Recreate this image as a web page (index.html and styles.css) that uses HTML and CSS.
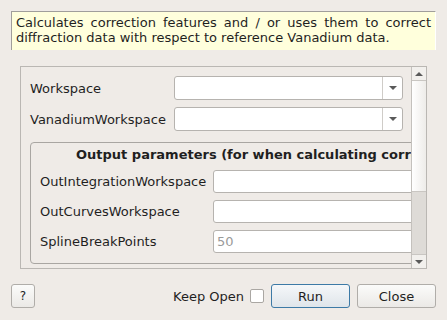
FILE: index.html
```html
<!DOCTYPE html>
<html lang="en">
<head>
    <meta charset="UTF-8">
    <title>Algorithm dialog</title>
    <link rel="stylesheet" href="styles.css">
</head>
<body>
    <div class="dialog">
        <div class="desc">Calculates correction features and / or uses them to correct diffraction data with respect to reference Vanadium data.</div>

        <div class="scroll">
            <div class="viewport">
                <div class="row">
                    <span class="label">Workspace</span>
                    <div class="combo"><span class="combo-btn"><span class="tri-down"></span></span></div>
                </div>
                <div class="row">
                    <span class="label">VanadiumWorkspace</span>
                    <div class="combo"><span class="combo-btn"><span class="tri-down"></span></span></div>
                </div>
                <div class="group">
                    <div class="group-title">Output parameters (for when calculating correction features)</div>
                    <div class="grow">
                        <span class="glabel">OutIntegrationWorkspace</span>
                        <div class="field"></div>
                    </div>
                    <div class="grow">
                        <span class="glabel">OutCurvesWorkspace</span>
                        <div class="field"></div>
                    </div>
                    <div class="grow">
                        <span class="glabel">SplineBreakPoints</span>
                        <div class="field placeholder">50</div>
                    </div>
                </div>
            </div>
            <div class="scrollbar">
                <div class="sb-arrow"><span class="tri-up"></span></div>
                <div class="sb-handle"></div>
                <div class="sb-trough"></div>
                <div class="sb-arrow"><span class="tri-down"></span></div>
            </div>
        </div>

        <div class="buttons">
            <button class="btn help">?</button>
            <span class="spacer"></span>
            <span class="keep">Keep Open</span>
            <span class="check"></span>
            <button class="btn run">Run</button>
            <button class="btn">Close</button>
        </div>
    </div>
</body>
</html>
```

FILE: styles.css
```css
body {
    margin: 0;
    background-color: #efebe7;
    font-family: "DejaVu Sans", sans-serif;
    font-size: 13px;
    color: #1f1f1f;
}

.dialog {
    padding: 11px;
}

/* description banner */
.desc {
    height: 39px;
    box-sizing: border-box;
    padding: 3px 4px 0 4px;
    background-color: #ffffdc;
    border-top: 1px solid #a09e9b;
    border-left: 1px solid #a09e9b;
    border-right: 1px solid #ffffff;
    line-height: 15px;
    text-align: justify;
    text-align-last: left;
}

/* scroll area */
.scroll {
    display: flex;
    height: 203px;
    box-sizing: border-box;
    margin: 16px 9px 0 9px;
    border: 1px solid #bab7b3;
}

.viewport {
    flex: 1;
    overflow: hidden;
    padding: 9px 0 0 9px;
}

.row {
    display: flex;
    align-items: center;
    height: 24px;
    margin-bottom: 7px;
}

.label {
    width: 144px;
    flex-shrink: 0;
}

.combo {
    display: flex;
    justify-content: flex-end;
    width: 229px;
    height: 24px;
    box-sizing: border-box;
    background-color: #ffffff;
    border: 1px solid #b6b3af;
    border-radius: 3px;
}

.combo-btn {
    display: flex;
    align-items: center;
    justify-content: center;
    width: 19px;
    border-left: 1px solid #cfccc8;
}

.tri-down {
    width: 0;
    height: 0;
    border-left: 4px solid transparent;
    border-right: 4px solid transparent;
    border-top: 4px solid #5a5a5a;
}

.tri-up {
    width: 0;
    height: 0;
    border-left: 4px solid transparent;
    border-right: 4px solid transparent;
    border-bottom: 4px solid #5a5a5a;
}

/* group box */
.group {
    width: 430px;
    height: 122px;
    box-sizing: border-box;
    margin-top: 11px;
    padding: 4px 0 0 9px;
    border: 1px solid #a9a6a2;
    border-radius: 4px;
}

.group-title {
    font-weight: bold;
    white-space: nowrap;
    padding-left: 36px;
    line-height: 16px;
    margin-bottom: 7px;
}

.grow {
    display: flex;
    align-items: center;
    height: 23px;
    margin-bottom: 7px;
}

.glabel {
    width: 173px;
    flex-shrink: 0;
}

.field {
    width: 240px;
    height: 23px;
    box-sizing: border-box;
    background-color: #ffffff;
    border: 1px solid #b6b3af;
    border-radius: 3px;
    padding: 3px 0 0 3px;
}

.placeholder {
    color: #9a9a9a;
}

/* vertical scrollbar */
.scrollbar {
    display: flex;
    flex-direction: column;
    width: 14px;
    border-left: 1px solid #c4c1bd;
}

.sb-arrow {
    display: flex;
    align-items: center;
    justify-content: center;
    height: 13px;
    background-color: #f2f0ed;
}

.sb-handle {
    height: 110px;
    border-top: 1px solid #c9c6c2;
    border-bottom: 1px solid #c9c6c2;
    background: linear-gradient(to right, #ffffff, #eeece9);
}

.sb-trough {
    flex: 1;
    background-color: #dedbd7;
    border-bottom: 1px solid #c9c6c2;
}

/* bottom buttons */
.buttons {
    display: flex;
    align-items: center;
    margin-top: 15px;
}

.spacer {
    flex: 1;
}

.btn {
    height: 24px;
    width: 79px;
    padding: 0;
    font-family: "DejaVu Sans", sans-serif;
    font-size: 13px;
    color: #1f1f1f;
    background: linear-gradient(#fbfbfa, #ebe9e6);
    border: 1px solid #b0ada9;
    border-radius: 3px;
    margin-left: 7px;
}

.btn.help {
    width: 24px;
    margin-left: 0;
    font-size: 12px;
}

.btn.run {
    border-color: #3d7aa6;
    background: linear-gradient(#f5f7f9, #dfe5ea);
}

.keep {
    margin-right: 6px;
}

.check {
    width: 14px;
    height: 14px;
    box-sizing: border-box;
    background-color: #ffffff;
    border: 1px solid #aaa7a3;
    border-radius: 2px;
}
```
